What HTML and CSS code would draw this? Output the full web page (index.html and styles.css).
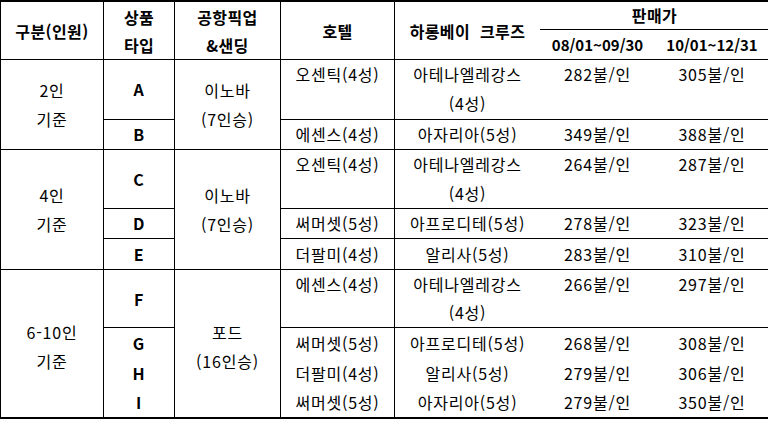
FILE: index.html
```html
<!DOCTYPE html>
<html lang="ko">
<head>
<meta charset="utf-8">
<title>상품 가격표</title>
<link rel="stylesheet" href="styles.css">
</head>
<body>
<table class="price-table">
  <colgroup>
    <col class="c-group">
    <col class="c-type">
    <col class="c-pick">
    <col class="c-hotel">
    <col class="c-cruise">
    <col class="c-p1">
    <col class="c-p2">
  </colgroup>
  <thead>
    <tr class="h1">
      <th rowspan="2" class="vr hb">구분(인원)</th>
      <th rowspan="2" class="vr hb">상품<br>타입</th>
      <th rowspan="2" class="vr hb">공항픽업<br>&amp;샌딩</th>
      <th rowspan="2" class="vr hb">호텔</th>
      <th rowspan="2" class="hb cruise-h">하롱베이 크루즈</th>
      <th colspan="2" class="hb sale">판매가</th>
    </tr>
    <tr class="h2">
      <th class="hb date">08/01~09/30</th>
      <th class="hb date">10/01~12/31</th>
    </tr>
  </thead>
  <tbody>
    <tr class="r-a">
      <td rowspan="2" class="vr hb">2인<br>기준</td>
      <td class="vr hb code">A</td>
      <td rowspan="2" class="vr hb">이노바<br>(7인승)</td>
      <td class="vr hb top">오센틱(4성)</td>
      <td class="hb top">아테나엘레강스<br>(4성)</td>
      <td class="hb top">282불/인</td>
      <td class="hb top">305불/인</td>
    </tr>
    <tr class="r-b">
      <td class="vr hb code">B</td>
      <td class="vr hb">에센스(4성)</td>
      <td class="hb">아자리아(5성)</td>
      <td class="hb">349불/인</td>
      <td class="hb">388불/인</td>
    </tr>
    <tr class="r-c">
      <td rowspan="3" class="vr hb">4인<br>기준</td>
      <td class="vr hb code">C</td>
      <td rowspan="3" class="vr hb">이노바<br>(7인승)</td>
      <td class="vr hb top">오센틱(4성)</td>
      <td class="hb top">아테나엘레강스<br>(4성)</td>
      <td class="hb top">264불/인</td>
      <td class="hb top">287불/인</td>
    </tr>
    <tr class="r-d">
      <td class="vr hb code">D</td>
      <td class="vr hb">써머셋(5성)</td>
      <td class="hb">아프로디테(5성)</td>
      <td class="hb">278불/인</td>
      <td class="hb">323불/인</td>
    </tr>
    <tr class="r-e">
      <td class="vr hb code">E</td>
      <td class="vr hb">더팔미(4성)</td>
      <td class="hb">알리사(5성)</td>
      <td class="hb">283불/인</td>
      <td class="hb">310불/인</td>
    </tr>
    <tr class="r-f">
      <td rowspan="4" class="vr lowered">6-10인<br>기준</td>
      <td class="vr hb code">F</td>
      <td rowspan="4" class="vr lowered">포드<br>(16인승)</td>
      <td class="vr hb top">에센스(4성)</td>
      <td class="hb top">아테나엘레강스<br>(4성)</td>
      <td class="hb top">266불/인</td>
      <td class="hb top">297불/인</td>
    </tr>
    <tr class="r-g">
      <td class="vr code">G</td>
      <td class="vr">써머셋(5성)</td>
      <td>아프로디테(5성)</td>
      <td>268불/인</td>
      <td>308불/인</td>
    </tr>
    <tr class="r-h">
      <td class="vr code">H</td>
      <td class="vr">더팔미(4성)</td>
      <td>알리사(5성)</td>
      <td>279불/인</td>
      <td>306불/인</td>
    </tr>
    <tr class="r-i">
      <td class="vr code">I</td>
      <td class="vr">써머셋(5성)</td>
      <td>아자리아(5성)</td>
      <td>279불/인</td>
      <td>350불/인</td>
    </tr>
  </tbody>
</table>
</body>
</html>
```

FILE: styles.css
```css
html, body {
  margin: 0;
  padding: 0;
  background: #fff;
}

.price-table {
  border-collapse: separate;
  border-spacing: 0;
  table-layout: fixed;
  width: 768px;
  border-top: 2px solid #000;
  border-left: 1px solid #000;
  border-bottom: 2px solid #000;
  font-family: "Noto Sans CJK KR", "Malgun Gothic", sans-serif;
  font-size: 16px;
  color: #000;
  letter-spacing: 0.8px;
}

.c-group  { width: 103px; }
.c-type   { width: 71px; }
.c-pick   { width: 106px; }
.c-hotel  { width: 114px; }
.c-cruise { width: 145px; }
.c-p1     { width: 115px; }
.c-p2     { width: 114px; }

.price-table th,
.price-table td {
  box-sizing: border-box;
  padding: 0;
  text-align: center;
  vertical-align: middle;
  line-height: 29px;
  white-space: nowrap;
  overflow: hidden;
}

.price-table th {
  font-weight: 700;
  line-height: 28px;
  letter-spacing: 0.4px;
}

.price-table th.sale { line-height: 27px; }

.vr { border-right: 1px solid #000; }
.hb { border-bottom: 1px solid #000; }

.price-table td.top { vertical-align: top; }

.price-table .r-f td { line-height: 28px; }

.price-table .r-f td.lowered {
  line-height: 29px;
  padding-top: 6px;
}

.code { font-weight: 700; }

.price-table th.date {
  font-size: 15px;
  letter-spacing: 0;
}

.cruise-h { word-spacing: 5px; }

.h1  { height: 28px; }
.h2  { height: 30px; }
.r-a { height: 60px; }
.r-b { height: 30px; }
.r-c { height: 59px; }
.r-d { height: 30px; }
.r-e { height: 31px; }
.r-f { height: 58px; }
.r-g { height: 30px; }
.r-h { height: 30px; }
.r-i { height: 29px; }
```
